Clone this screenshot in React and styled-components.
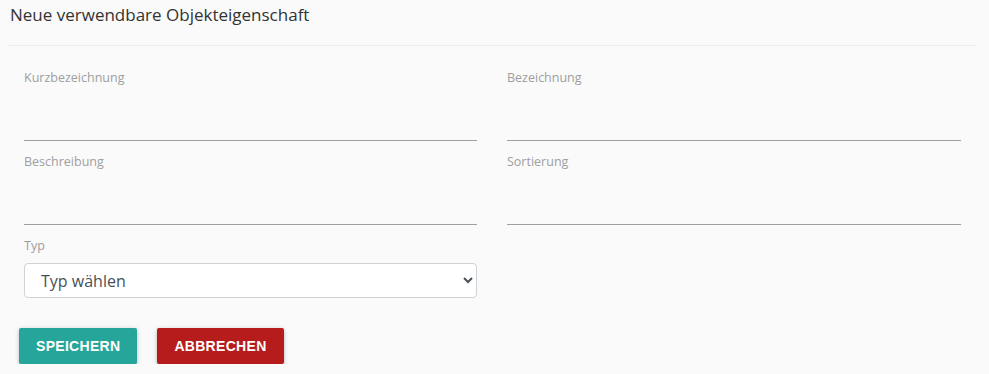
import styled, { createGlobalStyle } from "styled-components";

const GlobalStyle = createGlobalStyle`
  body {
    margin: 0;
    background: #fafafa;
    font-family: "Open Sans", sans-serif;
  }
`;

const Page = styled.div`
  padding: 0 13px 0 9px;
`;

const Title = styled.h1`
  margin: 0;
  padding: 3px 0 0 1px;
  height: 42px;
  font-size: 17px;
  font-weight: 400;
  color: #333;
  line-height: 24px;
  border-bottom: 1px solid #ececec;
`;

const Form = styled.form`
  padding: 24px 15px 0;
`;

const Grid = styled.div`
  display: grid;
  grid-template-columns: 453px 454px;
  column-gap: 30px;
  row-gap: 13px;
`;

const Field = styled.div`
  display: flex;
  flex-direction: column;
`;

const Label = styled.label`
  font-family: "Open Sans", sans-serif;
  font-size: 12.5px;
  color: #9e9e9e;
  line-height: 16px;
`;

const Input = styled.input`
  border: none;
  border-bottom: 1px solid #9e9e9e;
  background: transparent;
  height: 54px;
  padding: 0;
  outline: none;
  font-size: 16px;
`;

const Select = styled.select`
  margin-top: 9px;
  height: 35px;
  border: 1px solid #d0d3d6;
  border-radius: 4px;
  background: #fff;
  padding: 0 12px;
  font-family: "Open Sans", sans-serif;
  font-size: 16px;
  color: #495057;
`;

const Actions = styled.div`
  display: flex;
  gap: 20px;
  padding: 30px 0 0 10px;
`;

const Button = styled.button`
  height: 36px;
  padding: 0 17px;
  border: none;
  border-radius: 2px;
  background: ${(p) => (p.$danger ? "#b71c1c" : "#26a69a")};
  color: #fff;
  font-family: "Liberation Sans", Arial, sans-serif;
  font-weight: 700;
  font-size: 14px;
  letter-spacing: 0.3px;
  text-transform: uppercase;
  box-shadow: 0 2px 2px 0 rgba(0, 0, 0, 0.14), 0 3px 1px -2px rgba(0, 0, 0, 0.12),
    0 1px 5px 0 rgba(0, 0, 0, 0.2);
  cursor: pointer;
`;

export default function App() {
  return (
    <>
      <GlobalStyle />
      <Page>
        <Title>Neue verwendbare Objekteigenschaft</Title>
        <Form>
          <Grid>
            <Field>
              <Label htmlFor="kurz">Kurzbezeichnung</Label>
              <Input id="kurz" type="text" />
            </Field>
            <Field>
              <Label htmlFor="bez">Bezeichnung</Label>
              <Input id="bez" type="text" />
            </Field>
            <Field>
              <Label htmlFor="beschr">Beschreibung</Label>
              <Input id="beschr" type="text" />
            </Field>
            <Field>
              <Label htmlFor="sort">Sortierung</Label>
              <Input id="sort" type="text" />
            </Field>
            <Field>
              <Label htmlFor="typ">Typ</Label>
              <Select id="typ" defaultValue="">
                <option value="">Typ wählen</option>
              </Select>
            </Field>
          </Grid>
        </Form>
        <Actions>
          <Button type="button">Speichern</Button>
          <Button type="button" $danger>
            Abbrechen
          </Button>
        </Actions>
      </Page>
    </>
  );
}
